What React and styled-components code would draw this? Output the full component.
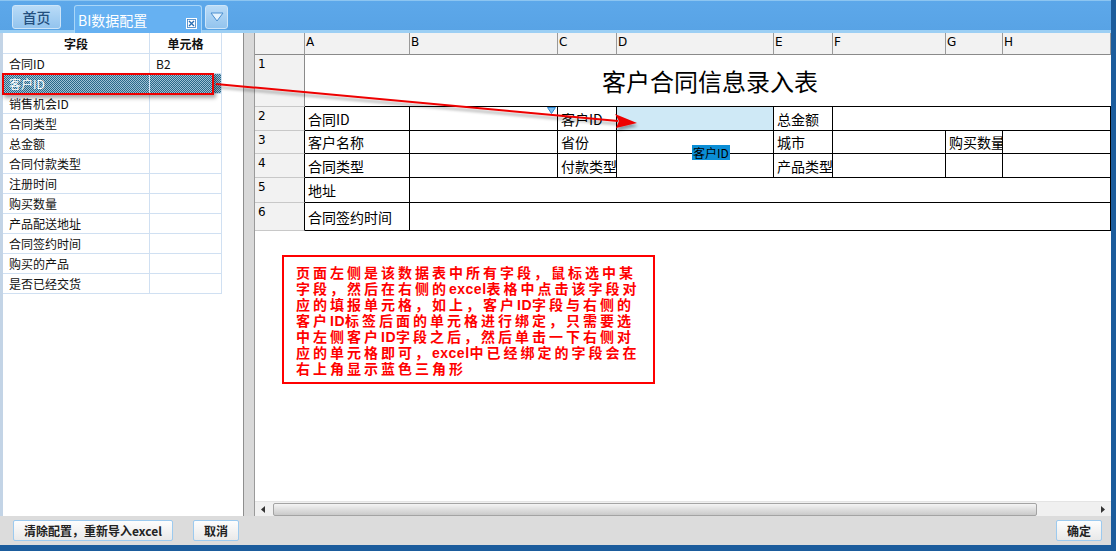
import React from 'react';
import styled, { createGlobalStyle } from 'styled-components';

const Global = createGlobalStyle`
  html, body { margin: 0; padding: 0; background: #fff; }
  body { font-family: "Noto Sans CJK SC", "Noto Sans", sans-serif; overflow: hidden; }
  * { box-sizing: border-box; }
`;

const Page = styled.div`
  position: relative;
  width: 1116px;
  height: 551px;
  display: flex;
  flex-direction: column;
  background: #dcdcdc;
  border-right: 5px solid #1b5c9c;
  border-bottom: 6px solid #1b5c9c;
`;

const TabBar = styled.div`
  height: 33px;
  flex: none;
  display: flex;
  align-items: flex-start;
  padding: 5px 0 0 12px;
  background: linear-gradient(#8cc5f1 0, #8cc5f1 1px, #5da8ea 1px, #58a3e5 30px, #9ccff4 30px, #9ccff4 33px);
`;

const HomeBtn = styled.div`
  width: 49px;
  height: 24px;
  display: flex;
  align-items: center;
  justify-content: center;
  border: 1px solid #cde5f9;
  border-radius: 3px;
  background: linear-gradient(#b9dbf7, #93c4ee);
  color: #24507f;
  font-size: 14px;
  font-weight: 500;
`;

const ActiveTab = styled.div`
  margin-left: 13px;
  width: 128px;
  height: 28px;
  display: flex;
  align-items: center;
  justify-content: space-between;
  padding: 0 4px 0 3px;
  border: 1px solid #a9d6f8;
  border-bottom: none;
  border-radius: 3px 3px 0 0;
  background: #66b1f2;
  color: #fff;
  font-size: 14px;
`;

const CloseIcon = styled.svg`
  margin-top: 8px;
`;

const DropBtn = styled.div`
  margin-left: 3px;
  width: 23px;
  height: 24px;
  display: flex;
  align-items: center;
  justify-content: center;
  border: 1px solid #cde5f9;
  border-radius: 3px;
  background: linear-gradient(#b9dbf7, #93c4ee);
`;

const Main = styled.div`
  flex: 1;
  display: flex;
  min-height: 0;
`;

const LeftPanel = styled.div`
  width: 243px;
  flex: none;
  background: #fff;
  border-left: 3px solid #c3d4e6;
`;

const FieldTable = styled.div`
  width: 219px;
  display: grid;
  grid-template-columns: 147px 72px;
  grid-auto-rows: 20px;
  grid-template-rows: 21px;
`;

const FCell = styled.div`
  display: flex;
  align-items: center;
  justify-content: ${p => (p.$head ? 'center' : 'flex-start')};
  padding-left: ${p => (p.$head ? '0' : '6px')};
  border-right: 1px solid #d0e0f2;
  border-bottom: 1px solid #d0e0f2;
  font-size: 12px;
  font-weight: ${p => (p.$head ? 700 : 400)};
  color: ${p => (p.$sel ? '#fff' : '#111')};
  background: ${p =>
    p.$sel
      ? 'repeating-conic-gradient(#2a6888 0 25%, #9fc2d4 0 50%) 0 0 / 2px 2px'
      : '#fff'};
  white-space: nowrap;
`;

const Splitter = styled.div`
  width: 12px;
  flex: none;
  background: #d9d9d9;
  border-left: 1px solid #8e8e8e;
  border-right: 1px solid #9a9a9a;
`;

const Sheet = styled.div`
  position: relative;
  width: 856px;
  flex: none;
  display: flex;
  flex-direction: column;
  background: #fff;
`;

const Grid = styled.div`
  display: grid;
  grid-template-columns: 50px 105px 148px 59px 157px 59px 113px 57px 108px;
  grid-template-rows: 22px 52px 24px 23px 24px 25px 28px;
`;

const ColHead = styled.div`
  background: #f2f2f2;
  border-right: 1px solid #9a9a9a;
  border-bottom: 1px solid #8a8a8a;
  font-family: "DejaVu Sans", sans-serif;
  font-size: 12px;
  padding: 2px 0 0 1px;
  color: #000;
`;

const RowHead = styled.div`
  background: #f2f2f2;
  border-right: 1px solid ${p => (p.$dark ? '#000' : '#8a8a8a')};
  border-bottom: 1px solid #c8c8c8;
  font-family: "DejaVu Sans", sans-serif;
  font-size: 12px;
  padding: 2px 0 0 3px;
  color: #000;
`;

const Title = styled.div`
  grid-column: span 8;
  display: flex;
  align-items: center;
  justify-content: center;
  padding-left: 4px;
  border-bottom: 1px solid #000;
  font-size: 24px;
  color: #000;
`;

const Cell = styled.div`
  position: relative;
  grid-column: span ${p => p.$span || 1};
  display: flex;
  align-items: center;
  padding-left: 3px;
  border-right: 1px solid #000;
  border-bottom: 1px solid #000;
  background: ${p => (p.$hl ? '#cfe9f6' : '#fff')};
  font-size: 14px;
  color: #000;
  white-space: nowrap;
  overflow: hidden;
`;

const BoundMark = styled.svg`
  position: absolute;
  top: 0;
  right: 1px;
`;

const SheetFill = styled.div`
  flex: 1;
`;

const HScroll = styled.div`
  height: 15px;
  flex: none;
  display: flex;
  align-items: center;
  background: #f0f0f0;
  border-top: 1px solid #e4e4e4;
`;

const ScrollArrow = styled.div`
  width: ${p => p.$w}px;
  display: flex;
  justify-content: ${p => (p.$right ? 'flex-end' : 'flex-start')};
  padding: ${p => (p.$right ? '0 6px 0 0' : '0 0 0 6px')};
`;

const Thumb = styled.div`
  width: 764px;
  height: 13px;
  border: 1px solid #a3a3a3;
  border-radius: 2px;
  background: linear-gradient(#f4f4f4, #dedede 50%, #cacaca);
`;

const Track = styled.div`
  flex: 1;
`;

const Footer = styled.div`
  height: 29px;
  flex: none;
  display: flex;
  align-items: center;
  gap: 20px;
  padding: 0 9px 0 13px;
  background: #dcdcdc;
`;

const Btn = styled.div`
  height: 21px;
  width: ${p => p.$w}px;
  margin-left: ${p => (p.$push ? 'auto' : '0')};
  display: flex;
  align-items: center;
  justify-content: center;
  border: 1px solid #9ccaef;
  border-radius: 2px;
  background: linear-gradient(#fdfdfd, #e9e9e9);
  font-size: 12px;
  font-weight: 700;
  color: #222;
  white-space: nowrap;
`;

const Note = styled.div`
  position: absolute;
  left: 27px;
  top: 222px;
  width: 373px;
  height: 129px;
  border: 2px solid #ff0000;
  padding: 8px 0 0 12px;
  color: #ff0000;
  font-family: "Liberation Sans", "Noto Sans CJK SC", sans-serif;
  font-size: 14px;
  font-weight: 700;
  line-height: 16px;
  letter-spacing: 3px;
  white-space: nowrap;
`;

const NoteLine = styled.div`
  height: 16px;
`;

const Latin = styled.span`
  letter-spacing: 0.5px;
`;

const Tag = styled.div`
  position: absolute;
  left: 437px;
  top: 112px;
  height: 15px;
  padding: 0 1px;
  background: #0b8ed6;
  color: #000;
  font-size: 12px;
  line-height: 15px;
`;

const SelBox = styled.div`
  position: absolute;
  left: 2px;
  top: 73px;
  width: 212px;
  height: 22px;
  border: 2px solid #ee0000;
  box-shadow: 2px 3px 4px rgba(0, 0, 0, 0.35);
  pointer-events: none;
`;

const Overlay = styled.svg`
  position: absolute;
  left: 0;
  top: 0;
  pointer-events: none;
`;

const fields = [
  ['合同ID', 'B2'],
  ['客户ID', ''],
  ['销售机会ID', ''],
  ['合同类型', ''],
  ['总金额', ''],
  ['合同付款类型', ''],
  ['注册时间', ''],
  ['购买数量', ''],
  ['产品配送地址', ''],
  ['合同签约时间', ''],
  ['购买的产品', ''],
  ['是否已经交货', ''],
];

const noteLines = [
  '页面左侧是该数据表中所有字段，鼠标选中某',
  '字段，然后在右侧的excel表格中点击该字段对',
  '应的填报单元格，如上，客户ID字段与右侧的',
  '客户ID标签后面的单元格进行绑定，只需要选',
  '中左侧客户ID字段之后，然后单击一下右侧对',
  '应的单元格即可，excel中已经绑定的字段会在',
  '右上角显示蓝色三角形',
];

const cols = ['', 'A', 'B', 'C', 'D', 'E', 'F', 'G', 'H'];

const renderLine = line =>
  line.split(/([A-Za-z]+)/).map((seg, i) =>
    /^[A-Za-z]+$/.test(seg) ? <Latin key={i}>{seg}</Latin> : <React.Fragment key={i}>{seg}</React.Fragment>
  );

export default function App() {
  return (
    <>
      <Global />
      <Page>
        <TabBar>
          <HomeBtn>首页</HomeBtn>
          <ActiveTab>
            <span>BI数据配置</span>
            <CloseIcon width="11" height="11" viewBox="0 0 11 11">
              <rect x="0.5" y="0.5" width="10" height="10" fill="#fff" stroke="#fff" />
              <rect x="1.5" y="1.5" width="8" height="8" fill="none" stroke="#3a7fc4" strokeWidth="0.8" />
              <path d="M3 3 L8 8 M8 3 L3 8" stroke="#2a6fb4" strokeWidth="1.4" />
            </CloseIcon>
          </ActiveTab>
          <DropBtn>
            <svg width="14" height="10" viewBox="0 0 14 10">
              <path d="M1 1 L13 1 L7 9 Z" fill="#e6f3fd" stroke="#4a8fd0" strokeWidth="1" />
            </svg>
          </DropBtn>
        </TabBar>
        <Main>
          <LeftPanel>
            <FieldTable>
              <FCell $head>字段</FCell>
              <FCell $head>单元格</FCell>
              {fields.map(([f, c], i) => (
                <React.Fragment key={f}>
                  <FCell $sel={i === 1}>{f}</FCell>
                  <FCell $sel={i === 1}>{c}</FCell>
                </React.Fragment>
              ))}
            </FieldTable>
          </LeftPanel>
          <Splitter />
          <Sheet>
            <Grid>
              {cols.map((c, i) => (
                <ColHead key={i}>{c}</ColHead>
              ))}
              <RowHead>1</RowHead>
              <Title>客户合同信息录入表</Title>

              <RowHead $dark>2</RowHead>
              <Cell>合同ID</Cell>
              <Cell>
                <BoundMark width="9" height="7" viewBox="0 0 9 7">
                  <path d="M0.5 0.5 L8.5 0.5 L4.5 6.5 Z" fill="#7cc0f0" stroke="#2f86d0" strokeWidth="1" />
                </BoundMark>
              </Cell>
              <Cell>客户ID</Cell>
              <Cell $hl />
              <Cell>总金额</Cell>
              <Cell $span={3} />

              <RowHead $dark>3</RowHead>
              <Cell>客户名称</Cell>
              <Cell />
              <Cell>省份</Cell>
              <Cell />
              <Cell>城市</Cell>
              <Cell />
              <Cell>购买数量</Cell>
              <Cell />

              <RowHead $dark>4</RowHead>
              <Cell>合同类型</Cell>
              <Cell />
              <Cell>付款类型</Cell>
              <Cell />
              <Cell>产品类型</Cell>
              <Cell />
              <Cell />
              <Cell />

              <RowHead $dark>5</RowHead>
              <Cell>地址</Cell>
              <Cell $span={7} />

              <RowHead $dark>6</RowHead>
              <Cell>合同签约时间</Cell>
              <Cell $span={7} />
            </Grid>
            <SheetFill />
            <HScroll>
              <ScrollArrow $w={18}>
                <svg width="4" height="7" viewBox="0 0 4 7">
                  <path d="M4 0 L0 3.5 L4 7 Z" fill="#333" />
                </svg>
              </ScrollArrow>
              <Thumb />
              <Track />
              <ScrollArrow $w={20} $right>
                <svg width="4" height="7" viewBox="0 0 4 7">
                  <path d="M0 0 L4 3.5 L0 7 Z" fill="#333" />
                </svg>
              </ScrollArrow>
            </HScroll>
            <Note>
              {noteLines.map(l => (
                <NoteLine key={l}>{renderLine(l)}</NoteLine>
              ))}
            </Note>
            <Tag>客户ID</Tag>
          </Sheet>
        </Main>
        <Footer>
          <Btn $w={160}>清除配置，重新导入excel</Btn>
          <Btn $w={46}>取消</Btn>
          <Btn $w={46} $push>确定</Btn>
        </Footer>
        <SelBox />
        <Overlay width="1116" height="551" viewBox="0 0 1116 551">
          <defs>
            <filter id="sh" x="-10%" y="-50%" width="120%" height="300%">
              <feDropShadow dx="1" dy="3" stdDeviation="1.5" floodColor="#000" floodOpacity="0.35" />
            </filter>
          </defs>
          <g filter="url(#sh)">
            <line x1="216" y1="84" x2="618" y2="121" stroke="#ee0000" strokeWidth="2" />
            <path d="M637 123 L615 114 L619 121 L616 128 Z" fill="#ee0000" />
          </g>
        </Overlay>
      </Page>
    </>
  );
}
